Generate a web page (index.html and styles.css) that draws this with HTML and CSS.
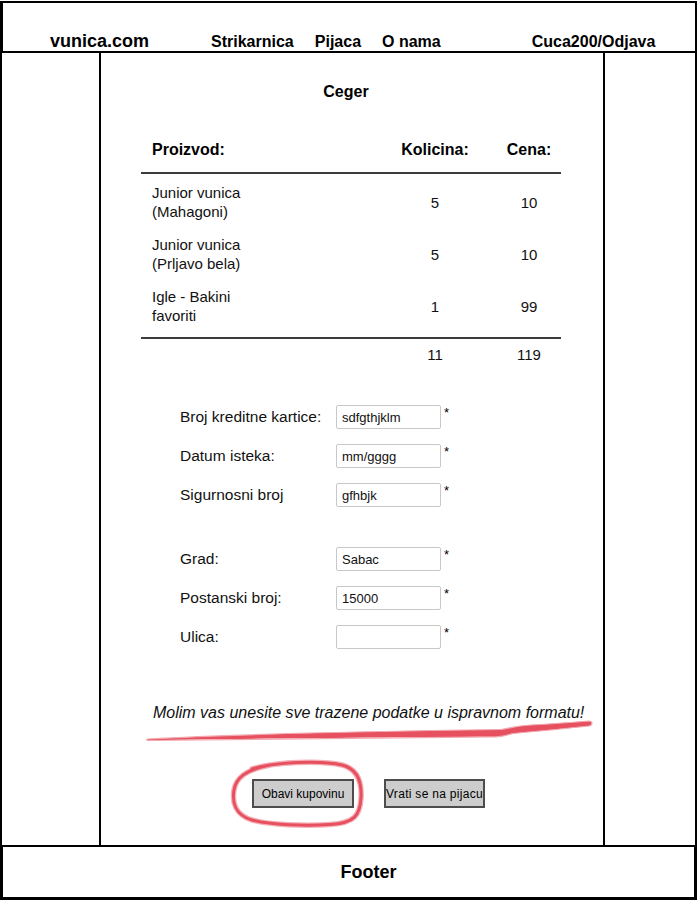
FILE: index.html
```html
<!DOCTYPE html>
<html lang="sr">
<head>
<meta charset="utf-8">
<title>vunica.com - Ceger</title>
<link rel="stylesheet" href="styles.css">
</head>
<body>
<div class="page">
  <header class="topbar">
    <span class="logo">vunica.com</span>
    <nav class="nav">
      <a href="#">Strikarnica</a>
      <a href="#">Pijaca</a>
      <a href="#">O nama</a>
    </nav>
    <span class="user">Cuca200/Odjava</span>
  </header>

  <div class="main">
    <aside class="side side-left"></aside>
    <section class="content">
      <h1 class="title">Ceger</h1>

      <div class="cart">
        <div class="cart-row cart-head">
          <div class="c-prod">Proizvod:</div>
          <div class="c-qty">Kolicina:</div>
          <div class="c-price">Cena:</div>
        </div>
        <div class="cart-body">
          <div class="cart-row">
            <div class="c-prod">Junior vunica<br>(Mahagoni)</div>
            <div class="c-qty">5</div>
            <div class="c-price">10</div>
          </div>
          <div class="cart-row">
            <div class="c-prod">Junior vunica<br>(Prljavo bela)</div>
            <div class="c-qty">5</div>
            <div class="c-price">10</div>
          </div>
          <div class="cart-row">
            <div class="c-prod">Igle - Bakini<br>favoriti</div>
            <div class="c-qty">1</div>
            <div class="c-price">99</div>
          </div>
        </div>
        <div class="cart-row cart-total">
          <div class="c-prod"></div>
          <div class="c-qty">11</div>
          <div class="c-price">119</div>
        </div>
      </div>

      <form class="checkout">
        <div class="fgroup">
          <div class="frow"><label class="flabel">Broj kreditne kartice:</label><input class="finput" type="text" value="sdfgthjklm"><span class="req">*</span></div>
          <div class="frow"><label class="flabel">Datum isteka:</label><input class="finput" type="text" value="mm/gggg"><span class="req">*</span></div>
          <div class="frow"><label class="flabel">Sigurnosni broj</label><input class="finput" type="text" value="gfhbjk"><span class="req">*</span></div>
        </div>
        <div class="fgroup">
          <div class="frow"><label class="flabel">Grad:</label><input class="finput" type="text" value="Sabac"><span class="req">*</span></div>
          <div class="frow"><label class="flabel">Postanski broj:</label><input class="finput" type="text" value="15000"><span class="req">*</span></div>
          <div class="frow"><label class="flabel">Ulica:</label><input class="finput" type="text" value=""><span class="req">*</span></div>
        </div>
      </form>

      <p class="note">Molim vas unesite sve trazene podatke u ispravnom formatu!</p>
      <svg class="underline" viewBox="0 0 502 24" aria-hidden="true">
        <path d="M47 21 C 120 17, 250 13.5, 400 11.5 C 410 10, 414 8, 430 7 C 455 5.5, 475 4, 488 3 C 492 3.5, 492 6.5, 488 8 C 470 10, 440 13, 412 15.5 C 405 17.5, 402 18.5, 395 18.8 C 250 19.5, 120 21, 47 22.5 C 45 22, 45 21.3, 47 21 Z" fill="#e6505f" stroke="#f2a8b0" stroke-width="1.2" stroke-linejoin="round"/>
      </svg>

      <div class="actions">
        <div class="btn-wrap">
          <button class="btn" type="button">Obavi kupovinu</button>
          <svg class="circle" viewBox="0 0 134 68" aria-hidden="true">
            <path d="M22 9 C 45 2, 90 0, 112 5 C 128 9, 132 22, 131 38 C 130 55, 125 63, 100 64.5 C 75 66, 40 65, 22 60 C 5 55, 2 42, 4 30 C 6 18, 15 10, 40 5" fill="none" stroke="#f4b0b7" stroke-width="5.5" stroke-linecap="round"/>
            <path d="M22 9 C 45 2, 90 0, 112 5 C 128 9, 132 22, 131 38 C 130 55, 125 63, 100 64.5 C 75 66, 40 65, 22 60 C 5 55, 2 42, 4 30 C 6 18, 15 10, 40 5" fill="none" stroke="#e6505f" stroke-width="3" stroke-linecap="round"/>
          </svg>
        </div>
        <button class="btn btn-back" type="button">Vrati se na pijacu</button>
      </div>
    </section>
    <aside class="side side-right"></aside>
  </div>

  <footer class="footer">Footer</footer>
</div>
</body>
</html>
```
FILE: styles.css
```css
body {
  margin: 1px 0 0 0;
  background: #fff;
  color: #000;
  font-family: "Liberation Sans", Arial, sans-serif;
}

.page {
  width: 697px;
}

/* ---------- header ---------- */
.topbar {
  height: 52px;
  box-sizing: border-box;
  border-style: solid;
  border-color: #000;
  border-width: 2px 2px 2px 3px;
  display: flex;
  align-items: baseline;
  padding-top: 29px;
  line-height: 1;
  font-weight: bold;
}

.logo {
  font-size: 18px;
  margin-left: 47px;
}

.nav {
  display: flex;
  gap: 21px;
  margin-left: 62px;
  font-size: 16px;
}

.nav a {
  color: #000;
  text-decoration: none;
}

.user {
  font-size: 16px;
  margin-left: 91px;
}

/* ---------- main columns ---------- */
.main {
  display: flex;
  height: 792px;
  box-sizing: border-box;
  border-left: 2px solid #000;
  border-right: 2px solid #000;
}

.side-left {
  width: 97px;
  border-right: 2px solid #000;
}

.content {
  width: 502px;
}

.side-right {
  width: 90px;
  border-left: 2px solid #000;
}

.title {
  margin: 30px 0 0;
  padding-right: 12px;
  text-align: center;
  font-size: 16px;
  line-height: 18px;
  font-weight: bold;
}

/* ---------- cart ---------- */
.cart {
  margin: 39px 0 0 40px;
  width: 420px;
}

.cart-row {
  display: grid;
  grid-template-columns: 260px 68px 92px;
  align-items: center;
}

.c-prod {
  padding-left: 11px;
}

.c-qty {
  text-align: center;
}

.c-price {
  text-align: center;
  padding-left: 28px;
}

.cart-head {
  font-size: 16px;
  font-weight: bold;
  line-height: 20px;
  padding-bottom: 12px;
  border-bottom: 2px solid #3c3c3c;
}

.cart-body {
  padding: 2px 0 5px;
  border-bottom: 2px solid #3c3c3c;
}

.cart-body .cart-row {
  height: 52px;
  font-size: 15px;
  line-height: 19px;
  color: #111;
}

.cart-total {
  padding-top: 6px;
  font-size: 15px;
  line-height: 19px;
  color: #111;
}

/* ---------- form ---------- */
.checkout {
  margin: 41px 0 0 79px;
  display: flex;
  flex-direction: column;
  gap: 40px;
}

.fgroup {
  display: flex;
  flex-direction: column;
  gap: 15px;
}

.frow {
  display: flex;
  align-items: center;
  height: 24px;
}

.flabel {
  width: 156px;
  font-size: 15.5px;
  color: #111;
}

.finput {
  width: 105px;
  height: 24px;
  box-sizing: border-box;
  margin: 0;
  padding: 0 5px;
  border: 1px solid #c8c8c8;
  border-radius: 2px;
  background: #fff;
  font: 13px "Liberation Sans", Arial, sans-serif;
  color: #111;
}

.req {
  align-self: flex-start;
  margin: 1px 0 0 3px;
  font-size: 13px;
  line-height: 1;
}

/* ---------- note + actions ---------- */
.note {
  margin: 55px 0 0;
  padding-left: 52px;
  font-style: italic;
  font-size: 16px;
  line-height: 18px;
  color: #111;
}

.underline {
  display: block;
  width: 502px;
  height: 24px;
  margin-top: -4px;
}

.actions {
  display: flex;
  gap: 30px;
  margin-top: 37px;
  padding-left: 151px;
}

.btn-wrap {
  position: relative;
}

.btn {
  width: 102px;
  height: 29px;
  box-sizing: border-box;
  padding: 0;
  background: #cdcdcd;
  border: 2px solid #4d4d4d;
  border-radius: 0;
  color: #000;
  font: 12px "Liberation Sans", Arial, sans-serif;
}

.btn-back {
  width: 101px;
  letter-spacing: 0.3px;
}

.circle {
  position: absolute;
  left: -22px;
  top: -19px;
  width: 134px;
  height: 68px;
  overflow: visible;
  pointer-events: none;
}

/* ---------- footer ---------- */
.footer {
  height: 55px;
  box-sizing: border-box;
  border: 3px solid #000;
  border-top-width: 2px;
  display: flex;
  align-items: center;
  justify-content: center;
  padding-left: 40px;
  font-size: 18px;
  font-weight: bold;
}
```
